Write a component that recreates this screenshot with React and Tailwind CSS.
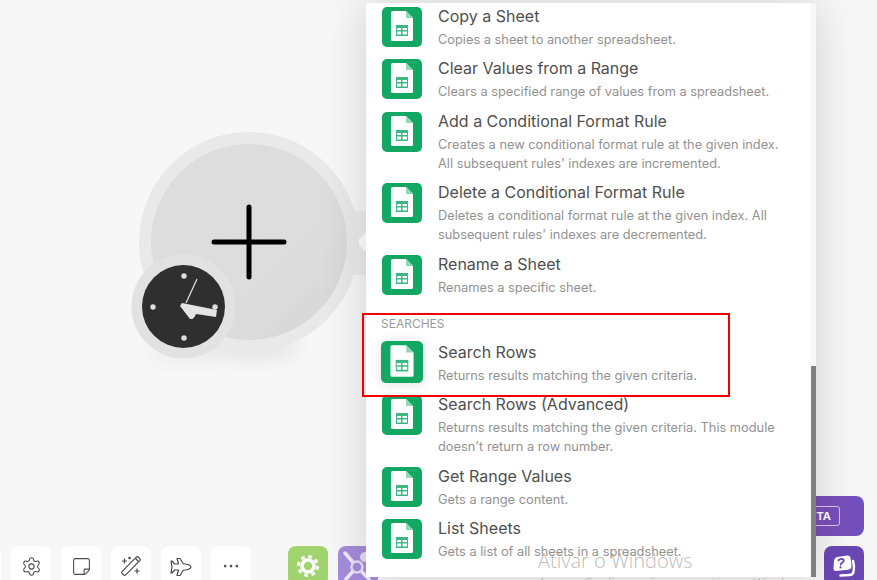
import { Settings, StickyNote, Ellipsis } from "lucide-react";

const BEFORE = [
  { title: "Copy a Sheet", desc: ["Copies a sheet to another spreadsheet."] },
  { title: "Clear Values from a Range", desc: ["Clears a specified range of values from a spreadsheet."] },
  { title: "Add a Conditional Format Rule", desc: ["Creates a new conditional format rule at the given index.", "All subsequent rules' indexes are incremented."] },
  { title: "Delete a Conditional Format Rule", desc: ["Deletes a conditional format rule at the given index. All", "subsequent rules' indexes are decremented."] },
  { title: "Rename a Sheet", desc: ["Renames a specific sheet."] },
];

const AFTER = [
  { title: "Search Rows", desc: ["Returns results matching the given criteria."], active: true },
  { title: "Search Rows (Advanced)", desc: ["Returns results matching the given criteria. This module", "doesn't return a row number."] },
  { title: "Get Range Values", desc: ["Gets a range content."] },
  { title: "List Sheets", desc: ["Gets a list of all sheets in a spreadsheet."] },
];

function SheetsIcon({ className = "" }) {
  return (
    <svg viewBox="0 0 40 40" className={`w-10 h-10 shrink-0 ${className}`}>
      <rect width="40" height="40" rx="5" fill="#12a864" />
      <path d="M10.5 4H24l7 7v21.5a1.5 1.5 0 0 1-1.5 1.5h-19A1.5 1.5 0 0 1 9 32.500V5.500A1.500 1.500 0 0 1 10.500 4z" fill="#fff" />
      <path d="M24 4l7 7h-7z" fill="#8fd8b5" />
      <path d="M14 18h12v11H14z" fill="#3cb983" />
      <path d="M15 21h4v2h-4zM20.500 21h4.500v2h-4.500zM15 24.500h4v3h-4zM20.500 24.500h4.500v3h-4.500z" fill="#fff" />
    </svg>
  );
}

function Row({ title, desc, active }) {
  return (
    <div className="flex gap-[16px] pl-[16px] pb-[7.400px]">
      <div className={active ? "pt-[2px]" : "pt-[3px]"}>
        <SheetsIcon className={active ? "scale-105 drop-shadow-[0_1px_5px_rgba(0,0,0,0.12)]" : ""} />
      </div>
      <div>
        <div className="text-[16px] leading-[24px] mb-[1.800px] text-[#505050]">{title}</div>
        {desc.map(line => (
          <div key={line} className="text-[12.800px] leading-[19.200px] text-[#929292] whitespace-nowrap">{line}</div>
        ))}
      </div>
    </div>
  );
}

function ToolButton({ children }) {
  return (
    <div className="w-10 h-10 bg-white rounded-lg flex items-center justify-center text-[#4a4a4a] shrink-0">
      {children}
    </div>
  );
}

function ScenarioNode() {
  return (
    <svg viewBox="0 0 260 260" className="absolute left-[120px] top-[120px] w-[260px] h-[260px]">
      <defs>
        <filter id="soft" x="-50%" y="-100%" width="200%" height="300%">
          <feGaussianBlur stdDeviation="10" />
        </filter>
        <linearGradient id="inner" x1="0" y1="0" x2="1" y2="1">
          <stop offset="0" stopColor="#dedede" />
          <stop offset="0.7" stopColor="#dcdcdc" />
          <stop offset="1" stopColor="#d5d5d5" />
        </linearGradient>
      </defs>
      <ellipse cx="132" cy="228" rx="50" ry="10" fill="#000" opacity="0.09" filter="url(#soft)" />
      <ellipse cx="64" cy="234" rx="36" ry="6" fill="#000" opacity="0.07" filter="url(#soft)" />
      <path d="M225 92c10-3 20 0 31-3v67c-11-1-21 0-31-3z" fill="#ececec" />
      <path d="M236 122l10-10v20z" fill="#fff" />
      <circle cx="129" cy="122" r="110" fill="#e9e9e9" />
      <circle cx="129" cy="122" r="98" fill="url(#inner)" />
      <path d="M129 87v70M94 122h70" stroke="#000" strokeWidth="5" strokeLinecap="round" />
      <circle cx="63.500" cy="186.500" r="52" fill="#e2e2e2" />
      <circle cx="63.500" cy="186.500" r="41.500" fill="#2f2f2f" />
      <circle cx="64" cy="156" r="2.700" fill="#dedede" />
      <circle cx="33" cy="187" r="2.700" fill="#dedede" />
      <circle cx="64" cy="218" r="2.700" fill="#dedede" />
      <circle cx="95" cy="187" r="2.700" fill="#dedede" />
      <path d="M66 183l11-24" stroke="#e4e4e4" strokeWidth="1.200" />
      <path d="M60 186l2-3 35 7-1 7-20-3-1.500 3-2 2-2.500 0z" fill="#e4e4e4" />
    </svg>
  );
}

export default function App() {
  return (
    <div className="relative w-[877px] h-[580px] overflow-hidden bg-[#f7f7f7] flex items-end font-['Inter',sans-serif]">
      <ScenarioNode />

      {/* bottom toolbar */}
      <div className="flex gap-2.5 -ml-[39px] -mb-[6px]">
        <ToolButton />
        <ToolButton><Settings size={21} strokeWidth={1.200} /></ToolButton>
        <ToolButton><StickyNote size={21} strokeWidth={1.200} className="rotate-90" /></ToolButton>
        <ToolButton>
          <svg viewBox="0 0 40 40" className="w-10 h-10" fill="none" stroke="#4a4a4a" strokeWidth="1.200">
            <rect x="8.500" y="17.500" width="23" height="5" rx="1.500" transform="rotate(-45 20 20)" />
            <path d="M24.500 12.500l3 3M11 15h5M13.500 12.500v5M23.500 25h5M26 22.500v5" />
            <circle cx="18.500" cy="12" r="0.700" fill="#4a4a4a" />
          </svg>
        </ToolButton>
        <ToolButton>
          <svg viewBox="0 0 40 40" className="w-10 h-10" fill="none" stroke="#4a4a4a" strokeWidth="1.200" strokeLinejoin="round">
            <path d="M30 21c0-1.500-3-3-6-3h-1.500L19 12.500h-3l1.500 5.500h-4L11 15h-1l1 6-1 6h1l2.500-3h4L16 29.500h3l3.500-5.500H24c3 0 6-1.500 6-3z" />
          </svg>
        </ToolButton>
        <ToolButton><Ellipsis size={20} strokeWidth={1.300} /></ToolButton>
        <div className="w-10 h-10 ml-[27px] rounded-lg bg-[#a1d36e] flex items-center justify-center shrink-0">
          <svg viewBox="0 0 24 24" className="w-[24px] h-[24px]">
            <circle cx="12" cy="12" r="6" fill="none" stroke="#fff" strokeWidth="3.600" />
            <circle cx="12" cy="12" r="9.500" fill="none" stroke="#fff" strokeWidth="3" strokeDasharray="3.730 3.730" />
          </svg>
        </div>
        <div className="w-10 h-10 rounded-lg bg-[#a58bdc] shrink-0">
          <svg viewBox="0 0 40 40" className="w-10 h-10">
            <path d="M7 7l12 14M8 33l11-12M31 33L19 21" stroke="#efeaf9" strokeWidth="3.500" strokeLinecap="round" />
            <circle cx="19" cy="21" r="5.500" fill="#a58bdc" stroke="#e4dcf5" strokeWidth="2.500" />
            <circle cx="27" cy="11" r="5" fill="#e4dcf5" />
          </svg>
        </div>
      </div>

      {/* right side buttons */}
      <div className="ml-auto mr-[13px] -mb-[6px] flex flex-col items-end gap-2.5">
        <div className="w-[120px] h-10 rounded-lg bg-gradient-to-r from-[#8a4db0] to-[#724fbe] flex items-center justify-end pr-[24px]">
          <span className="px-2 border border-white/70 rounded-[3px] text-[11px] font-bold text-white leading-[18px]">BETA</span>
        </div>
        <div className="w-10 h-10 rounded-lg bg-[#6a48b4] flex items-center justify-center">
          <svg viewBox="0 0 40 40" className="w-10 h-10">
            <path d="M29 15c1 3 1.500 7 .5 11-.5 2-2 3-4 3l-9 .500" fill="none" stroke="#fff" strokeWidth="2.500" strokeLinecap="round" />
            <path d="M13 11l10-1.500c2-.3 3.500 1 3.700 3l.8 7c.2 2.500-1 4-3.500 4.300l-12 1.200c-1.500.2-2.500-.8-2.500-2.200l.5-8c.2-2 1.500-3.400 3-3.800z" fill="#fff" />
            <path d="M14.500 14.500c.5-2 5-2.500 5.300 0 .2 2-2.800 2-3 4M16.500 21v.6" fill="none" stroke="#6a48b4" strokeWidth="1.800" strokeLinecap="round" />
          </svg>
        </div>
      </div>

      {/* module picker panel */}
      <div className="absolute left-[366px] top-[3px] w-[450px] h-[574px] bg-white rounded-t-[3px] overflow-hidden shadow-[0_0_45px_rgba(0,0,0,0.16)] pt-[1px]">
        {BEFORE.map(r => <Row key={r.title} {...r} />)}
        <div className="pl-[15px] pt-[11.400px] h-[35.400px] text-[12px] leading-[16px] text-[#9a9a9a]">SEARCHES</div>
        {AFTER.map(r => <Row key={r.title} {...r} />)}
        <div className="absolute right-0 top-0 bottom-0 w-[5px] bg-[#f7f7f7]">
          <div className="absolute left-0 right-0 top-[363px] bottom-0 bg-[#808080]" />
        </div>
      </div>

      {/* red annotation */}
      <div className="absolute left-[362px] top-[313px] w-[368px] h-[84px] border-2 border-[#f00000] pointer-events-none" />

      {/* windows watermark */}
      <div className="absolute left-[538px] top-[548px] text-[#808080]/55 font-['Open_Sans',sans-serif] font-light whitespace-nowrap pointer-events-none">
        <div className="text-[20px] leading-[26px]">Ativar o Windows</div>
        <div className="text-[13.500px] leading-[18px] mt-[-1px]">Acesse Configurações para ativar o Windows.</div>
      </div>
    </div>
  );
}
